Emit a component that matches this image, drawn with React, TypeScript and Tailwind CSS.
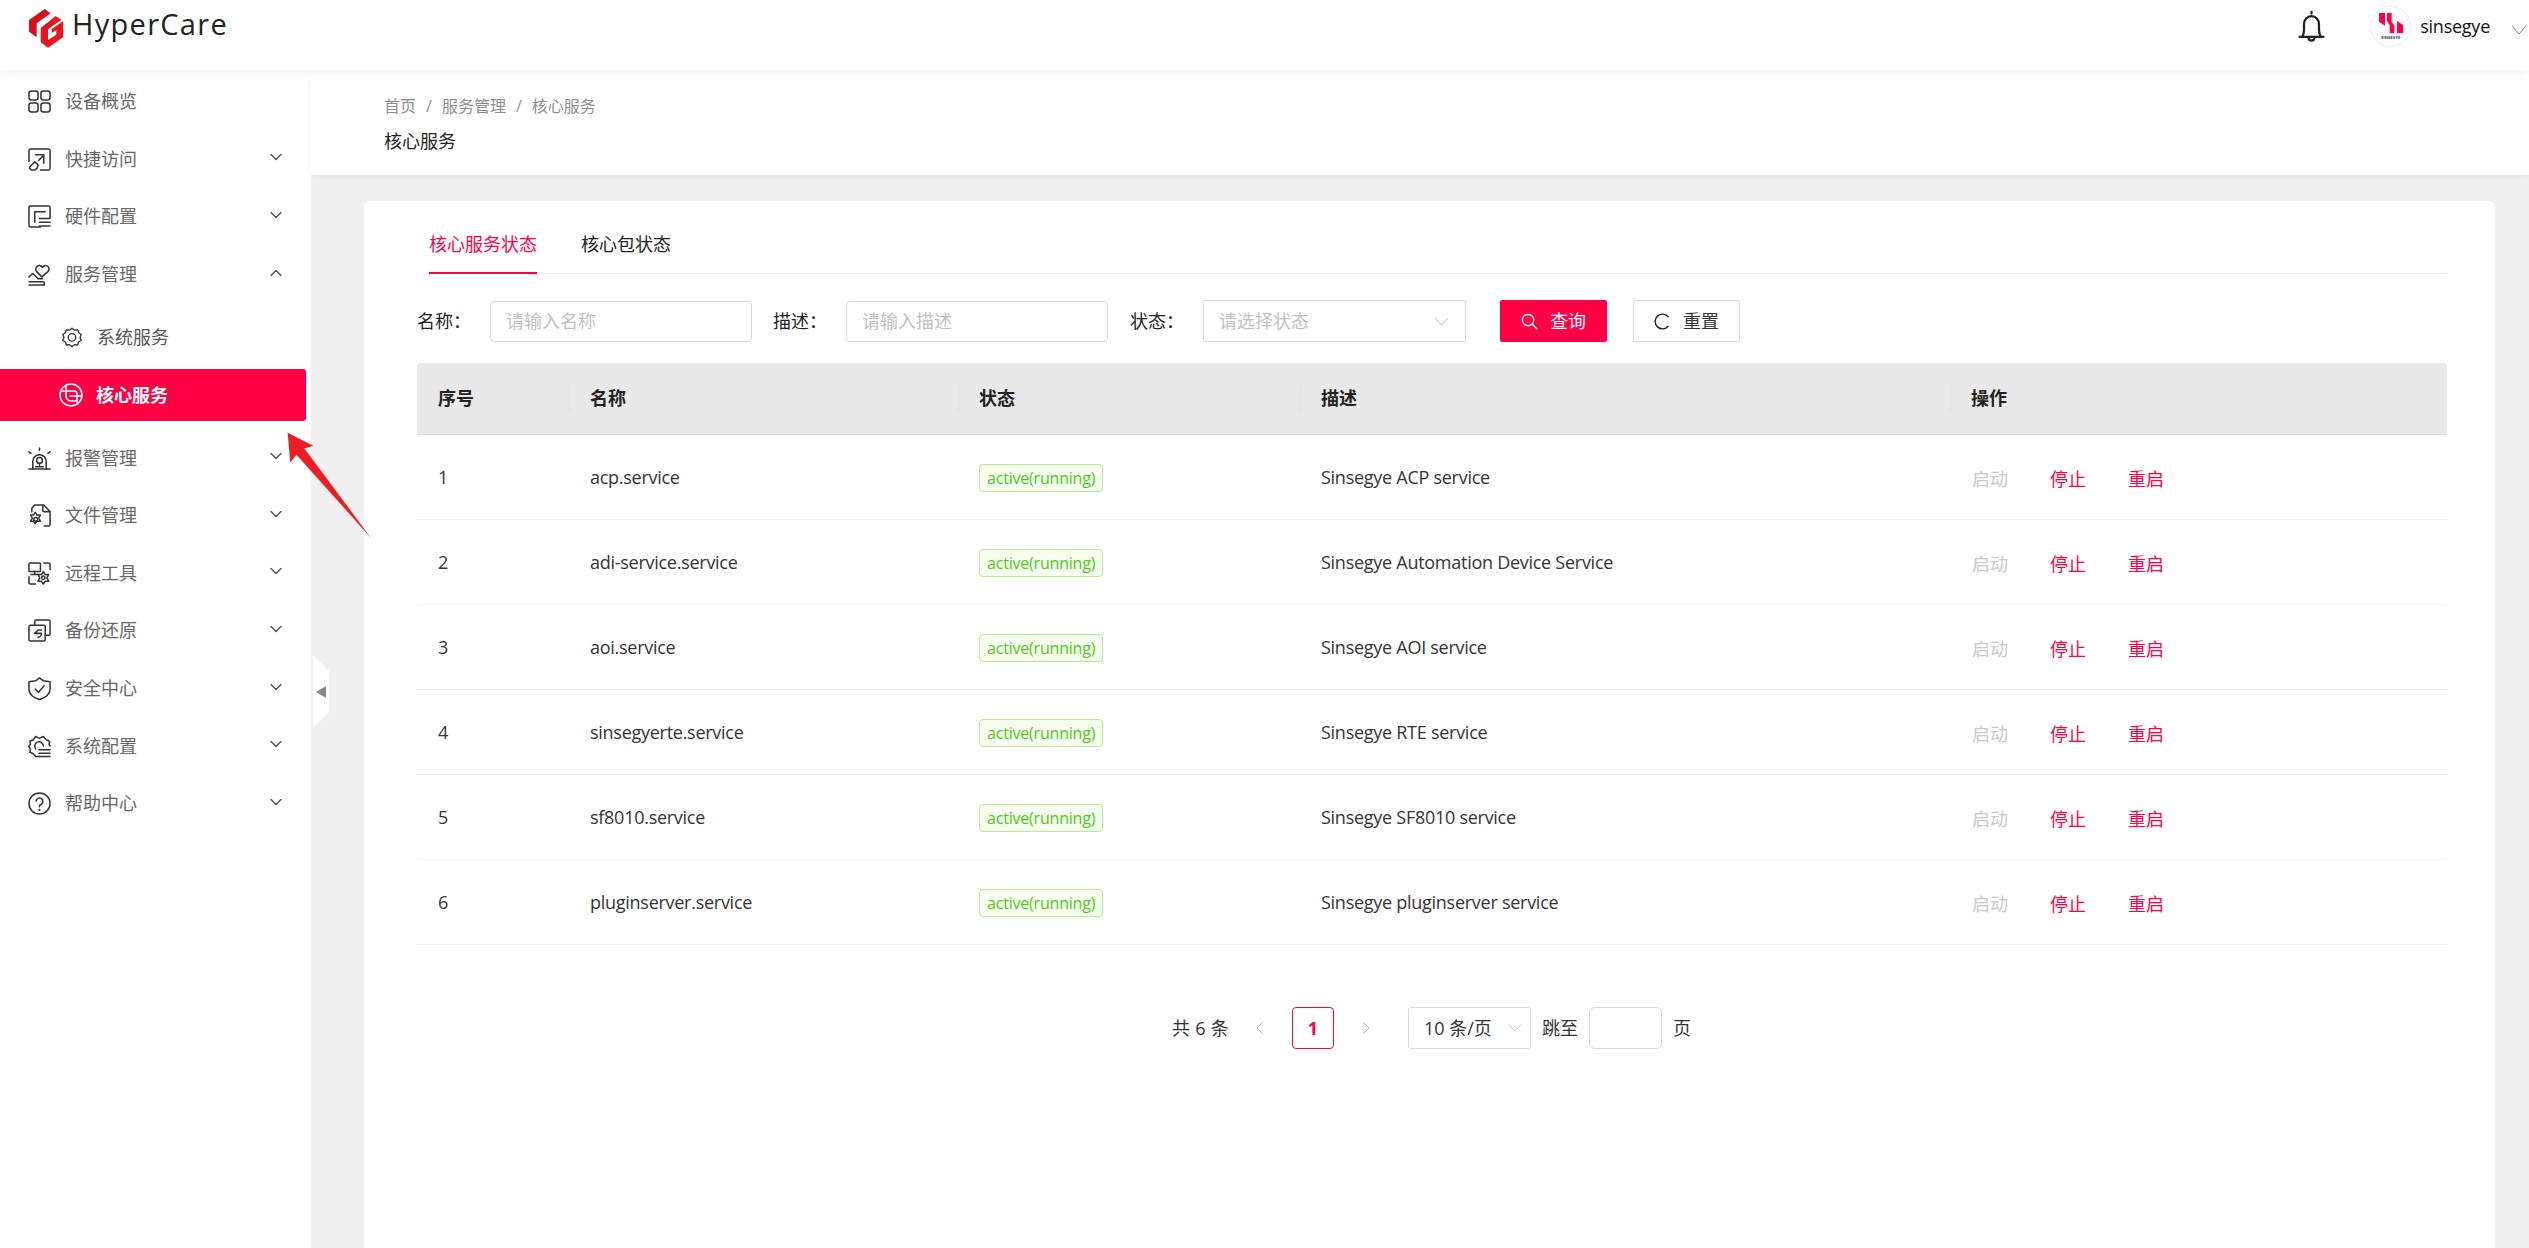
import React from "react";

const FONT = "font-['Open_Sans','Noto_Sans_CJK_SC',sans-serif]";

type IconProps = { className?: string };

const base = {
  viewBox: "0 0 24 24",
  fill: "none",
  stroke: "currentColor",
  strokeWidth: 1.6,
  strokeLinecap: "round" as const,
  strokeLinejoin: "round" as const,
};

const IconGrid = (p: IconProps) => (
  <svg {...base} {...p}>
    <rect x="1" y="1" width="9.5" height="9.5" rx="2.6" />
    <rect x="13.5" y="1" width="9.5" height="9.5" rx="2.6" />
    <rect x="1" y="13.5" width="9.5" height="9.5" rx="2.6" />
    <rect x="13.5" y="13.5" width="9.5" height="9.5" rx="2.6" />
  </svg>
);
const IconQuick = (p: IconProps) => (
  <svg {...base} {...p}>
    <path d="M1 14V2.500C1 1.700 1.700 1 2.500 1h19c.8 0 1.500.7 1.500 1.500v19c0 .8-.7 1.500-1.500 1.500H13" />
    <path d="M8 7h8.500v9" />
    <path d="M16 8l-5 5" />
    <path d="M2 19.500l5-5 3.500 3-1 3.500-2.500 2H3.500L1.500 21z" />
  </svg>
);
const IconHardware = (p: IconProps) => (
  <svg {...base} {...p}>
    <path d="M13 23H2.500C1.700 23 1 22.300 1 21.500V2.500C1 1.700 1.700 1 2.500 1h19c.8 0 1.500.7 1.500 1.500V13" />
    <path d="M7 18V7h11" />
    <path d="M12 14h11M12 18h11M12 22h11" />
  </svg>
);
const IconHeart = (p: IconProps) => (
  <svg {...base} {...p}>
    <path d="M14.500 14.500l-5.500-5.500c-2-2.500-.5-6.500 2.800-6.500 1.500 0 2.500.8 3.200 2 .7-1.200 1.900-2 3.300-2 3.300 0 4.700 3.800 2.700 6.200z" />
    <path d="M1 14.500l4-3.500 5.500 5.500h4.500" />
    <path d="M1 19.500h14.500c.8 0 1.500.6 1.500 1.500v2H1" />
  </svg>
);
const IconGear = (p: IconProps) => (
  <svg {...base} {...p}>
    <path d="M12 1.500l3 2.300 3.700-.4 1.400 3.500 3 2.200-1.500 3.400 1.500 3.400-3 2.200-1.400 3.500-3.700-.4-3 2.300-3-2.300-3.700.4-1.400-3.500-3-2.200 1.500-3.400-1.500-3.400 3-2.200 1.400-3.500 3.700.4z" />
    <circle cx="12" cy="12.500" r="4.500" />
  </svg>
);
const IconCore = (p: IconProps) => (
  <svg {...base} {...p}>
    <circle cx="12" cy="12" r="11" />
    <path d="M7 2.500V13a5 5 0 0 0 5 5h4.500" />
    <path d="M1.500 8H15a3 3 0 0 1 3 3v10" />
    <path d="M11 13h12" />
  </svg>
);
const IconAlarm = (p: IconProps) => (
  <svg {...base} {...p}>
    <path d="M1 23h22" />
    <path d="M5 23v-8a7 7 0 0 1 14 0v8" />
    <circle cx="12" cy="14" r="3" />
    <path d="M12 17v2M8 20.500h8M12 1v2.500M1 5l2 1.500M23 5l-2 1.500" />
  </svg>
);
const IconFile = (p: IconProps) => (
  <svg {...base} {...p}>
    <path d="M4 8V4.500L7 1h9.500L23 8v13.500c0 .8-.7 1.500-1.500 1.500H17" />
    <path d="M15.500 1.500V7c0 .6.400 1 1 1H23" />
    <path d="M6 9.500l2 3h4l-2 3.500 2 3.500H8l-2 3-2-3H0.800l2-3.500-2-3.500H4z" transform="translate(2 0) scale(.92)" />
    <circle cx="8" cy="16" r="2" />
  </svg>
);
const IconRemote = (p: IconProps) => (
  <svg {...base} {...p}>
    <rect x="1" y="1" width="12" height="9" rx="1" />
    <path d="M7 10v3M3 13h8" />
    <path d="M16.500 1h5c.8 0 1.500.7 1.500 1.500V8M1 15.500V21.500c0 .8.700 1.500 1.500 1.500H8" />
    <path d="M16 10l2 3h3.500l-1.700 3.500 1.700 3.500H18l-2 3-2-3h-3.500l1.700-3.500-1.700-3.500H14z" />
    <circle cx="16" cy="16.500" r="1.800" />
  </svg>
);
const IconBackup = (p: IconProps) => (
  <svg {...base} {...p}>
    <path d="M7 6V2.500C7 1.700 7.700 1 8.500 1h13c.8 0 1.500.7 1.500 1.500v13c0 .8-.7 1.500-1.500 1.500H18" />
    <path d="M2.500 6.500h14c.8 0 1.500.7 1.500 1.500v13.500c0 .8-.7 1.500-1.500 1.500h-14c-.8 0-1.500-.7-1.500-1.500V8c0-.8.700-1.500 1.500-1.500z" />
    <path d="M14 11.500h-3.500L7 15h7c0 2-1.500 4-3.500 4" />
  </svg>
);
const IconShield = (p: IconProps) => (
  <svg {...base} {...p}>
    <path d="M12 1l4 3 7 1v8c0 5-5 9-11 10.500C6 22 1 18 1 13V5l7-1z" />
    <path d="M7.500 12.500l3.500 3.500 6-7" />
  </svg>
);
const IconConfig = (p: IconProps) => (
  <svg {...base} {...p}>
    <path d="M23 11.500l-1-1.500 .5-3.500-3.500-1.500L16 1.500l-4 2-4-2L5.500 5 2 6.500 2.500 10 .8 12l1.700 2.500L2 18l3.500 1.500 2.500 3h4" />
    <path d="M8 14.500a4.500 4.500 0 1 1 8-3" />
    <path d="M11.500 15.500H23M11.500 19H23M11.500 22.500H23" />
  </svg>
);
const IconHelp = (p: IconProps) => (
  <svg {...base} {...p}>
    <circle cx="12" cy="12" r="11" />
    <path d="M8.500 9.500A3.500 3.500 0 1 1 13.500 13c-1 .5-1.500 1-1.500 2v.5" />
    <path d="M12 18.500v.3" strokeWidth="2" />
  </svg>
);

const Chevron = ({ up, className }: { up?: boolean; className?: string }) => (
  <svg viewBox="0 0 12 8" fill="none" stroke="currentColor" strokeWidth="1.500" strokeLinecap="round" strokeLinejoin="round" className={className}>
    {up ? <path d="M1 6.500l5-5 5 5" /> : <path d="M1 1.500l5 5 5-5" />}
  </svg>
);

const Thin = ({ className, d }: { className?: string; d: string }) => (
  <svg viewBox="0 0 16 16" fill="none" stroke="currentColor" strokeWidth="1" className={className}>
    <path d={d} />
  </svg>
);

const Logo = () => (
  <svg viewBox="0 0 150 150" className="w-[50px] h-[50px] shrink-0">
    <path d="M15 48L62 15 80 28 38 58v42L15 83z" fill="#d6101a" />
    <path d="M50 72L95 36 112 47 72 76v32l25-16V78L83 87V75l34-23v48l-45 31-22-16z" fill="#e8141f" />
  </svg>
);

const menuTop = [
  { label: "设备概览", Icon: IconGrid, noArrow: true },
  { label: "快捷访问", Icon: IconQuick },
  { label: "硬件配置", Icon: IconHardware },
  { label: "服务管理", Icon: IconHeart, up: true },
];
const menuBottom = [
  { label: "报警管理", Icon: IconAlarm },
  { label: "文件管理", Icon: IconFile },
  { label: "远程工具", Icon: IconRemote },
  { label: "备份还原", Icon: IconBackup },
  { label: "安全中心", Icon: IconShield },
  { label: "系统配置", Icon: IconConfig },
  { label: "帮助中心", Icon: IconHelp },
];

const MenuItem = ({ label, Icon, up, noArrow }: { label: string; Icon: (p: IconProps) => React.ReactElement; up?: boolean; noArrow?: boolean }) => (
  <div className="h-[57.6px] flex items-center pl-[28px] pr-[29px] text-[#666] text-[18px]">
    <Icon className="w-[23px] h-[23px] text-[#333] shrink-0" />
    <span className="ml-[14px] flex-1">{label}</span>
    {!noArrow && <Chevron up={up} className="w-[12px] h-[8px] text-[#555] -mt-[4px]" />}
  </div>
);

const rows = [
  ["1", "acp.service", "Sinsegye ACP service"],
  ["2", "adi-service.service", "Sinsegye Automation Device Service"],
  ["3", "aoi.service", "Sinsegye AOI service"],
  ["4", "sinsegyerte.service", "Sinsegye RTE service"],
  ["5", "sf8010.service", "Sinsegye SF8010 service"],
  ["6", "pluginserver.service", "Sinsegye pluginserver service"],
];

const COLS = "grid grid-cols-[152px_389px_342px_650px_497px]";

const HeadCell = ({ label, divider }: { label: string; divider?: boolean }) => (
  <div className="relative pl-[21px] flex items-center font-bold text-[#222]">
    {divider && <span className="absolute left-0 top-[22px] h-[27px] w-px bg-[#e2e2e2]" />}
    {label}
  </div>
);

export default function App() {
  return (
    <div className={`${FONT} relative w-[2529px] h-[1248px] overflow-hidden bg-white text-[18px] text-[#333] flex flex-col`}>
      <header className="relative z-10 h-[70px] shrink-0 bg-white shadow-[0_3px_8px_rgba(0,0,0,0.06)] flex items-center pl-[24px] pr-[2px]">
        <div className="-mt-[12px]"><Logo /></div>
        <span className="ml-[-2px] -mt-[24px] text-[29px] font-medium tracking-[1.3px] text-[#222] leading-none">HyperCare</span>
        <div className="flex-1" />
        <div className="flex items-center -mt-[17px]">
          <svg viewBox="0 0 26 32" fill="none" stroke="#222" strokeWidth="2.200" strokeLinecap="round" strokeLinejoin="round" className="w-[27px] h-[35px]">
            <path d="M13 3.500V2M1.500 26h23M4 26c1.500-2 1.800-4 1.800-7v-5c0-4.500 3-8 7.200-8s7.200 3.500 7.200 8v5c0 3 .3 5 1.800 7" />
            <path d="M10 26c0 2.200 1.300 3.500 3 3.500s3-1.300 3-3.500" />
          </svg>
          <div className="ml-[45px] w-[41px] h-[41px] rounded-full border border-[#eee] bg-white flex flex-col items-center justify-center">
            <svg viewBox="0 0 72 60" className="w-[24px] h-[20px]" fill="#ff0045">
              <path d="M0 0h18v38L0 26z" />
              <path d="M24 0h14v26l8 12v22H32V36l-8-12z" />
              <path d="M54 24l18 12v24H54z" />
            </svg>
            <span className="text-[4px] leading-[5px] font-bold text-[#333] mt-[2px]">SINSEGYE</span>
          </div>
          <span className="ml-[9px] text-[18px] tracking-[-0.25px] text-[#111]">sinsegye</span>
          <Thin d="M1 4l7 8 7-8" className="ml-[21px] mt-[6px] w-[16px] h-[16px] text-[#888]" />
        </div>
      </header>

      <div className="flex-1 flex min-h-0">
        <aside className="w-[311px] shrink-0 bg-white pt-[3px]">
          {menuTop.map((m) => <MenuItem key={m.label} {...m} />)}
          <div className="mt-[8px] h-[52px] flex items-center pl-[62px] text-[#555]">
            <IconGear className="w-[20px] h-[20px] text-[#333]" />
            <span className="ml-[15px]">系统服务</span>
          </div>
          <div className="mt-[6px] mb-[8px] w-[306px] h-[52px] rounded-r-[3px] bg-[#ff0045] flex items-center pl-[59px] text-white font-bold">
            <IconCore className="w-[24px] h-[24px] text-white" />
            <span className="ml-[13px]">核心服务</span>
          </div>
          {menuBottom.map((m) => <MenuItem key={m.label} {...m} />)}
        </aside>

        <main className="flex-1 min-w-0 bg-[#f0f0f0] flex flex-col mt-[10px]">
          <div className="h-[95px] shrink-0 bg-white pl-[73px] shadow-[0_2px_6px_rgba(0,0,0,0.06)]">
            <div className="pt-[12px] h-[39px] text-[16px] leading-[22px] text-[#8c8c8c] flex items-center gap-[10px]">
              <span>首页</span><span>/</span><span>服务管理</span><span>/</span><span>核心服务</span>
            </div>
            <div className="mt-[8px] text-[18px] leading-[28px] text-[#222]">核心服务</div>
          </div>

          <section className="flex-1 ml-[53px] mr-[34px] mt-[26px] rounded-t-[6px] bg-white pl-[53px] pr-[49px]">
            <div className="ml-[12px] h-[73px] border-b border-[#e8e8e8] flex items-end gap-[44px]">
              <div className="h-[73px] pt-[15px] flex items-center text-[#ff0045] border-b-2 border-[#ff0045] -mb-px">核心服务状态</div>
              <div className="h-[73px] pt-[15px] flex items-center text-[#222]">核心包状态</div>
            </div>

            <div className="mt-[26px] h-[42px] flex items-center">
              <label className="w-[73px] text-[#222]">名称：</label>
              <div className="w-[262px] h-[41px] rounded-[4px] border border-[#d9d9d9] pl-[15px] flex items-center text-[#bfbfbf]">请输入名称</div>
              <label className="ml-[21px] w-[73px] text-[#222]">描述：</label>
              <div className="w-[262px] h-[41px] rounded-[4px] border border-[#d9d9d9] pl-[15px] flex items-center text-[#bfbfbf]">请输入描述</div>
              <label className="ml-[22px] w-[73px] text-[#222]">状态：</label>
              <div className="w-[263px] h-[42px] rounded-[2px] border border-[#d9d9d9] px-[15px] flex items-center justify-between text-[#bfbfbf]">
                <span>请选择状态</span>
                <Thin d="M1 4l7 8 7-8" className="w-[15px] h-[15px] text-[#bbb] mr-[1px]" />
              </div>
              <button className="ml-[34px] w-[107px] h-[42px] rounded-[2px] bg-[#ff0045] text-white flex items-center justify-center gap-[12px]">
                <svg viewBox="0 0 18 18" fill="none" stroke="#fff" strokeWidth="1.500" strokeLinecap="round" className="w-[17px] h-[17px]"><circle cx="7.500" cy="7.500" r="6" /><path d="M12 12l5 5" /></svg>
                <span>查询</span>
              </button>
              <button className="ml-[26px] w-[107px] h-[42px] rounded-[2px] border border-[#d9d9d9] bg-white text-[#333] flex items-center justify-center gap-[12px]">
                <svg viewBox="0 0 18 18" fill="none" stroke="#222" strokeWidth="1.500" strokeLinecap="round" className="w-[17px] h-[17px]"><path d="M15 4a7.800 7.800 0 1 0 0 10" /></svg>
                <span>重置</span>
              </button>
            </div>

            <div className="mt-[21px] w-[2030px]">
              <div className={`${COLS} h-[72px] bg-[#e9e9e9] rounded-t-[4px] border-b border-[#dcdcdc]`}>
                <HeadCell label="序号" />
                <HeadCell label="名称" divider />
                <HeadCell label="状态" divider />
                <HeadCell label="描述" divider />
                <HeadCell label="操作" divider />
              </div>
              {rows.map(([n, name, desc]) => (
                <div key={n} className={`${COLS} h-[85px] border-b border-[#f0f0f0] items-center text-[#333] tracking-[-0.27px]`}>
                  <div className="pl-[21px]">{n}</div>
                  <div className="pl-[21px]">{name}</div>
                  <div className="pl-[21px] pt-[2px]">
                    <span className="inline-flex items-center h-[28px] px-[7px] rounded-[4px] border border-[#b7eb8f] bg-[#f6ffed] text-[16px] tracking-[-0.2px] text-[#52c41a]">active(running)</span>
                  </div>
                  <div className="pl-[21px]">{desc}</div>
                  <div className="pl-[22px] flex gap-[42px] pt-[5px] tracking-normal">
                    <span className="text-[#c8c8c8]">启动</span>
                    <span className="text-[#ff0045]">停止</span>
                    <span className="text-[#ff0045]">重启</span>
                  </div>
                </div>
              ))}
            </div>

            <div className="mt-[62px] h-[42px] ml-[755px] flex items-center text-[#333]">
              <span className="w-[80px] whitespace-nowrap tracking-[0.3px]">共 6 条</span>
              <Thin d="M11 2L5 8l6 6" className="w-[16px] h-[16px] text-[#bbb]" />
              <span className="ml-[24px] w-[42px] h-[42px] rounded-[4px] border border-[#ff0045] text-[#ff0045] font-bold flex items-center justify-center">1</span>
              <Thin d="M5 2l6 6-6 6" className="ml-[24px] w-[16px] h-[16px] text-[#bbb]" />
              <div className="ml-[34px] w-[123px] h-[42px] rounded-[3px] border border-[#d9d9d9] pl-[15px] pr-[8px] flex items-center justify-between">
                <span className="whitespace-nowrap">10 条/页</span>
                <Thin d="M1 4l7 8 7-8" className="w-[14px] h-[14px] text-[#bbb]" />
              </div>
              <span className="ml-[11px]">跳至</span>
              <div className="ml-[11px] w-[73px] h-[42px] rounded-[6px] border border-[#d9d9d9]" />
              <span className="ml-[11px]">页</span>
            </div>
          </section>
        </main>
      </div>

      <div className="absolute left-[313px] top-[655px] w-[16px] h-[73px] bg-white [clip-path:polygon(0_0,100%_22%,100%_78%,0_100%)] flex items-center justify-center">
        <span className="w-0 h-0 border-y-[6px] border-y-transparent border-r-[10px] border-r-[#888]" />
      </div>

      <svg viewBox="0 0 100 125" className="absolute left-[285px] top-[427px] w-[88px] h-[116px]" style={{ pointerEvents: "none" }}>
        <path d="M3 3l29 15-10 3 76 102L13 28l-7 9z" fill="#ee1c25" />
      </svg>
    </div>
  );
}
